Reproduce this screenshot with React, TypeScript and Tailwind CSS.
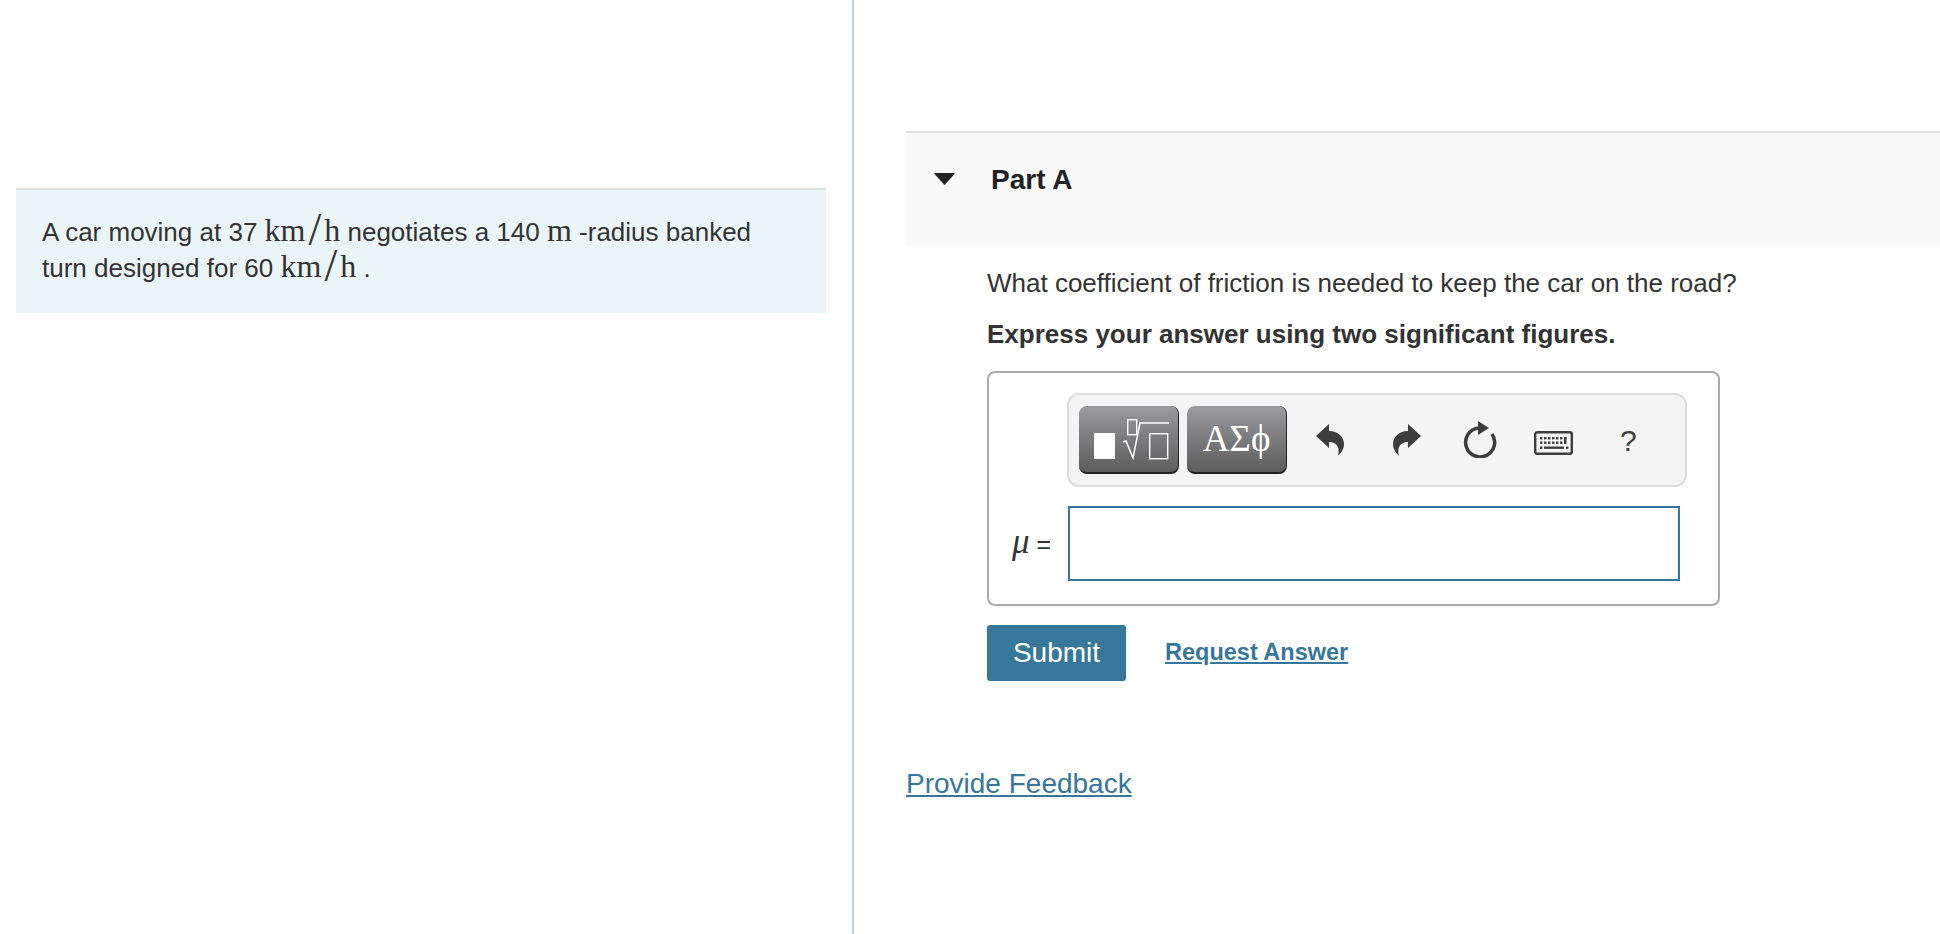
const sans = "font-['Liberation_Sans',Arial,sans-serif]";

function KmH() {
  return (
    <span className="font-['Liberation_Serif',serif] text-[32px] leading-[0]">
      km<span className="inline-block px-[3px] align-[-4px] text-[46px] leading-[0] font-light">/</span>h
    </span>
  );
}

function TemplatesIcon() {
  return (
    <svg width="76" height="44" viewBox="0 0 76 44" fill="none">
      <rect x="0" y="16" width="21" height="26" fill="#fff" />
      <rect x="33.700" y="2.700" width="9" height="15" stroke="#fff" strokeWidth="1.4" />
      <path d="M29 25l3-1 7 17 7-35h29" stroke="#fff" strokeWidth="1.5" />
      <rect x="55.700" y="16.700" width="18" height="25" stroke="#fff" strokeWidth="1.4" />
    </svg>
  );
}

function ReplyIcon({ flip }: { flip?: boolean }) {
  return (
    <svg width="28" height="32" viewBox="0 0 28 32" className={flip ? "-scale-x-100" : ""}>
      <path d="M0 12L13 0v7c9 0 15 6 15 13 0 5-3 9-6 12 2-7 0-14-9-14v6z" fill="#3d3d3d" />
    </svg>
  );
}

function ResetIcon() {
  return (
    <svg width="34" height="38" viewBox="0 0 34 38" fill="none">
      <path d="M29 14A14.500 14.500 0 1 1 15 8" stroke="#3d3d3d" strokeWidth="3.500" />
      <path d="M15 1l11 7-11 7z" fill="#3d3d3d" />
    </svg>
  );
}

function KeyboardIcon() {
  const keys = [
    "M6 6h2.400v2.400H6z", "M10 6h2.400v2.400H10z", "M14 6h2.400v2.400H14z", "M18 6h2.400v2.400H18z", "M22 6h2.400v2.400H22z", "M26 6h2.400v2.400H26z", "M30 6h2.400v2.400H30z",
    "M6 10.500h2.400v2.400H6z", "M10 10.500h2.400v2.400H10z", "M14 10.500h2.400v2.400H14z", "M18 10.500h2.400v2.400H18z", "M22 10.500h2.400v2.400H22z", "M26 10.500h2.400v2.400H26z", "M30 6h2.400v7H30z",
    "M6 15.500h2.400v2.400H6z", "M10 15.500h20v2.400H10z", "M32 15.500h2.400v2.400H32z",
  ];
  return (
    <svg width="39" height="24" viewBox="0 0 39 24" fill="none">
      <rect x="1.200" y="1.200" width="36.600" height="21.600" rx="2" stroke="#3d3d3d" strokeWidth="2.400" />
      {keys.map((d) => (
        <path key={d} d={d} fill="#3d3d3d" />
      ))}
    </svg>
  );
}

export default function App() {
  return (
    <div className={`flex h-[934px] w-[1940px] overflow-hidden bg-white text-[#333] ${sans}`}>
      {/* Problem statement */}
      <div className="w-[854px] shrink-0 border-r-2 border-[#c3cde6] pl-4 pr-[26px] pt-[188px]">
        <div className="h-[125px] border-t-2 border-[#dedede] bg-[#e9f5f7] pl-[26px] pt-[24px] text-[26px] leading-[36px]">
          <p>
            A car moving at 37 <KmH /> negotiates a 140{" "}
            <span className="font-['Liberation_Serif',serif] text-[32px] leading-[0]">m</span> -radius banked
          </p>
          <p>
            turn designed for 60 <KmH /> .
          </p>
        </div>
      </div>

      {/* Part A */}
      <div className="flex-1 pl-[52px] pt-[131px]">
        <div className="flex h-[115px] items-start border-t-2 border-[#dedede] bg-[#f9f9f9] pl-[28px] pt-[31px]">
          <svg width="21" height="12" viewBox="0 0 21 12" className="mt-[9px]">
            <path d="M1 0h19q1 0 .5 1L11 11.500q-.5.500-1 0L.5 1Q0 0 1 0z" fill="#222" />
          </svg>
          <span className="ml-[36px] text-[28px] leading-[32px] font-bold text-[#222]">Part A</span>
        </div>

        <div className="pl-[81px]">
          <p className="mt-[19px] text-[26px] leading-[36px]">What coefficient of friction is needed to keep the car on the road?</p>
          <p className="mt-[15px] text-[26px] leading-[36px] font-bold">Express your answer using two significant figures.</p>

          <div className="mt-[19px] h-[235px] w-[733px] rounded-lg border-2 border-[#aaa] pl-[78px] pt-[20px]">
            <div className="flex h-[94px] w-[620px] items-center rounded-xl border-2 border-[#ddd] bg-[#f4f4f4] pl-[10px]">
              <div className="flex h-[68px] w-[100px] items-center rounded-lg border-b-2 border-r border-[#222] bg-linear-to-b from-[#9b9ba0] to-[#5d5d5d] pl-[15px]">
                <TemplatesIcon />
              </div>
              <div className="ml-2 flex h-[68px] w-[100px] items-center justify-center rounded-lg border-b-2 border-r border-[#222] bg-linear-to-b from-[#9b9ba0] to-[#5d5d5d] font-['Liberation_Serif',serif] text-[37px] text-white">
                ΑΣϕ
              </div>
              <div className="ml-[29px]"><ReplyIcon /></div>
              <div className="ml-[49px]"><ReplyIcon flip /></div>
              <div className="mb-[3px] ml-[42px]"><ResetIcon /></div>
              <div className="ml-[37px] mt-[6px]"><KeyboardIcon /></div>
              <span className="ml-[47px] text-[30px] text-[#3d3d3d]">?</span>
            </div>
            <div className="relative ml-px mt-[19px] h-[75px] w-[612px] border-2 border-[#37779b] bg-white">
              <span className="absolute right-[calc(100%+19px)] top-[21px] whitespace-nowrap text-[25px] leading-[30px]">
                <i className="font-['Liberation_Serif',serif] text-[35px] leading-[0]">μ</i> =
              </span>
            </div>
          </div>

          <div className="mt-[19px] flex items-center">
            <button className="h-[56px] w-[139px] rounded-[3px] bg-[#37779b] text-[28px] text-white">Submit</button>
            <a className="ml-[39px] text-[23.500px] font-bold text-[#37779b] underline">Request Answer</a>
          </div>
        </div>

        <a className="mt-[86px] block text-[28px] leading-[34px] text-[#37779b] underline">Provide Feedback</a>
      </div>
    </div>
  );
}
